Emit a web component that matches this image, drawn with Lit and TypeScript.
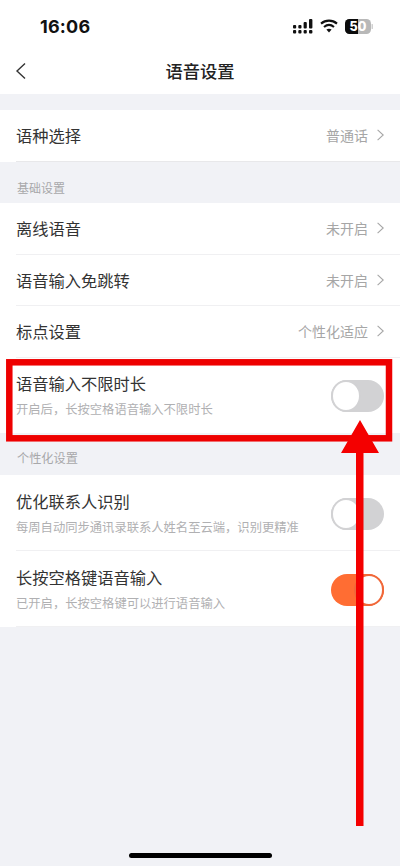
import { LitElement, html, css } from "lit";
import { customElement } from "lit/decorators.js";

const chevron = html`<svg class="chev" viewBox="0 0 7 12" width="7" height="12"><path d="M.6.8L6.2 6 .6 11.2" fill="none" stroke="currentColor" stroke-width="1.1"/></svg>`;

@customElement("app-root")
export class AppRoot extends LitElement {
  static styles = css`
    :host { display: block; width: 400px; height: 866px; position: relative; overflow: hidden; background: #f1f2f6;
      font-family: "Liberation Sans", "Noto Sans CJK SC", sans-serif; color: #333; }
    .top { background: #fff; height: 94px; display: flex; flex-direction: column; }
    .status { height: 48px; display: flex; align-items: center; justify-content: space-between; padding: 4px 27px 0 40px; box-sizing: border-box; }
    .time { font: 700 18px "Inter", "Liberation Sans", sans-serif; color: #111; letter-spacing: 0.2px; }
    .sicons { display: flex; align-items: center; gap: 7px; }
    .nav { flex: 1; display: flex; align-items: center; justify-content: center; position: relative; padding-bottom: 2px; }
    .nav .back { position: absolute; left: 15px; top: 14px; }
    .title { font-size: 17.3px; font-weight: 500; color: #222; }
    .gap { height: 16px; }
    .group { background: #fff; }
    .row { margin-left: 16px; padding-right: 16px; display: flex; align-items: center; justify-content: space-between; height: 51.5px; border-bottom: 1px solid #f0f0f2; box-sizing: border-box; }
    .row.first { height: 52px; padding-bottom: 2px; border-bottom-color: #e8e8ea; }
    .name { font-size: 16.25px; color: #333; }
    .val { display: flex; align-items: center; gap: 9px; color: #a6a6a6; font-size: 14px; }
    .val .chev { color: #a6a6a6; }
    .head { height: 41px; padding: 9px 0 0 17px; display: flex; align-items: center; font-size: 12px; color: #a8a8aa; box-sizing: border-box; }
    .head.p { height: 42px; padding-top: 8px; font-size: 12.2px; }
    .row.tall { height: 76px; padding-top: 3px; }
    .row.t1 { height: 75.5px; border-bottom: none; padding-top: 1px; }
    .txt { display: flex; flex-direction: column; gap: 5px; margin-top: -3px; }
    .sub { font-size: 12.3px; color: #b0b0b2; }
    .sw { width: 53px; height: 32px; border-radius: 16px; background: #d2d2d4; position: relative; flex: none; }
    .sw::after { content: ""; position: absolute; left: 0; top: 0; width: 26px; height: 28px; border: 2px solid #d2d2d4; box-sizing: content-box; border-radius: 50%; background: #fff; }
    .sw.on { background: #ff6d33; }
    .sw.on::after { left: auto; right: 0; border-color: #f0683a; }
    .overlay { position: absolute; left: 0; top: 0; pointer-events: none; }
    .home { position: absolute; left: 129px; top: 853px; width: 143px; height: 5px; border-radius: 3px; background: #000; }
  `;

  render() {
    return html`
      <div class="top">
        <div class="status">
          <span class="time">16:06</span>
          <div class="sicons">
            <svg width="20" height="15" viewBox="0 0 20 15" fill="#111">
              <rect x="0" y="6" width="3.2" height="3.4" rx="1"/><rect x="0" y="11" width="3.2" height="3.4" rx="1"/>
              <rect x="5.3" y="6" width="3.2" height="3.4" rx="1"/><rect x="5.3" y="11" width="3.2" height="3.4" rx="1"/>
              <rect x="10.6" y="3" width="3.2" height="6.4" rx="1"/><rect x="10.6" y="11" width="3.2" height="3.4" rx="1"/>
              <rect x="16" y="0" width="3.4" height="9.4" rx="1"/><rect x="16" y="11" width="3.4" height="3.4" rx="1"/>
            </svg>
            <svg width="18" height="14" viewBox="0 0 18 14" fill="none" stroke="#111" stroke-width="2.1">
              <path d="M1 4.6C5.6.6 12.4.6 17 4.6"/><path d="M4 8c3-2.5 7-2.5 10 0"/><path d="M9 13.4l-2.6-2.9c1.5-1 3.7-1 5.2 0z" fill="#111" stroke="none"/>
            </svg>
            <svg width="28" height="15" viewBox="0 0 28 15">
              <defs><clipPath id="b"><rect width="26" height="15" rx="4.5"/></clipPath></defs>
              <g clip-path="url(#b)"><rect width="26" height="15" fill="#b8b8b8"/><rect width="13" height="15" fill="#0b0b0b"/></g>
              <rect x="26.6" y="5" width="1.2" height="5" rx=".6" fill="#c4c4c4"/>
              <text x="13" y="12" text-anchor="middle" font-family="Inter, Liberation Sans, sans-serif" font-size="12.5" font-weight="800" fill="#fff">50</text>
            </svg>
          </div>
        </div>
        <div class="nav">
          <svg class="back" width="12" height="18" viewBox="0 0 12 18"><path d="M10 1.5L2 9l8 7.5" fill="none" stroke="#333" stroke-width="1.4"/></svg>
          <span class="title">语音设置</span>
        </div>
      </div>
      <div class="gap"></div>
      <div class="group">
        <div class="row first"><span class="name">语种选择</span><span class="val">普通话 ${chevron}</span></div>
      </div>
      <div class="head">基础设置</div>
      <div class="group">
        <div class="row"><span class="name">离线语音</span><span class="val">未开启 ${chevron}</span></div>
        <div class="row"><span class="name">语音输入免跳转</span><span class="val">未开启 ${chevron}</span></div>
        <div class="row"><span class="name">标点设置</span><span class="val">个性化适应 ${chevron}</span></div>
        <div class="row t1">
          <div class="txt"><span class="name">语音输入不限时长</span><span class="sub">开启后，长按空格语音输入不限时长</span></div>
          <div class="sw"></div>
        </div>
      </div>
      <div class="head p">个性化设置</div>
      <div class="group">
        <div class="row tall">
          <div class="txt"><span class="name">优化联系人识别</span><span class="sub">每周自动同步通讯录联系人姓名至云端，识别更精准</span></div>
          <div class="sw"></div>
        </div>
        <div class="row tall">
          <div class="txt"><span class="name">长按空格键语音输入</span><span class="sub">已开启，长按空格键可以进行语音输入</span></div>
          <div class="sw on"></div>
        </div>
      </div>
      <svg class="overlay" width="400" height="866" viewBox="0 0 400 866">
        <rect x="9.3" y="362.3" width="379.7" height="76" fill="none" stroke="#ee0000" stroke-width="6.5"/>
        <path d="M360 420L379 453H363.5V826H356V453H341Z" fill="#f40000"/>
      </svg>
      <div class="home"></div>
    `;
  }
}
